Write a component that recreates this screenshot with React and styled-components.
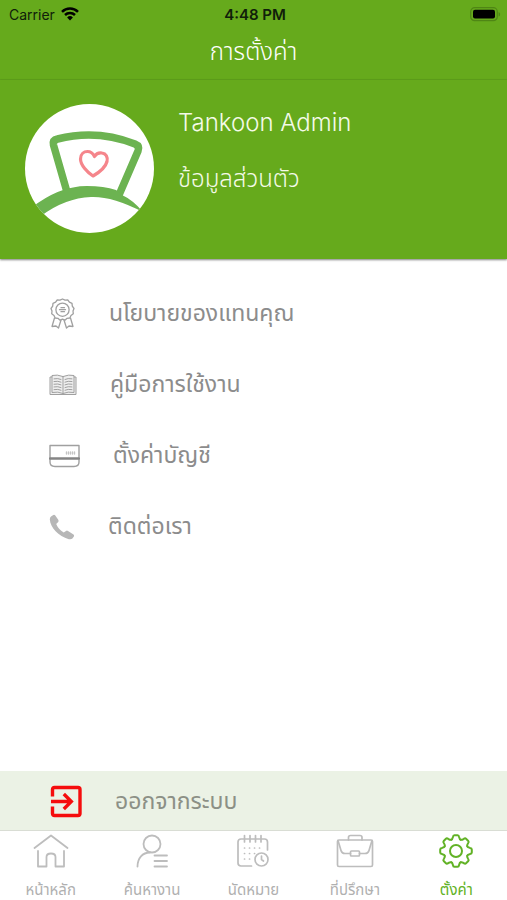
import React from "react";
import styled, { createGlobalStyle } from "styled-components";

const GlobalStyle = createGlobalStyle`
  * {
    box-sizing: border-box;
  }

  body {
    margin: 0;
    background: #fff;
    font-family: Lato, "Noto Sans Thai", "Noto Sans", "Liberation Sans", sans-serif;
    font-weight: 400;
  }
`;

const Screen = styled.div`
  display: flex;
  flex-direction: column;
  min-height: 100vh;
`;

const StatusBar = styled.div`
  display: grid;
  grid-template-columns: 1fr auto 1fr;
  align-items: center;
  height: 28px;
  padding: 0 6px 0 9px;
  background: #66aa1c;
  color: #10200a;
  font-family: Inter, "Liberation Sans", sans-serif;
  font-size: 14px;

  .carrier {
    display: flex;
    align-items: center;
    gap: 6px;
  }

  .battery {
    justify-self: end;
  }

  svg {
    display: block;
  }
`;

const Clock = styled.time`
  font-size: 15px;
  font-weight: 600;
`;

const TitleBar = styled.header`
  display: flex;
  justify-content: center;
  height: 52px;
  border-bottom: 1px solid #5fa11a;
  background: #66aa1c;

  h1 {
    margin: 0;
    color: #fff;
    font-size: 24px;
    font-weight: 300;
    line-height: 46px;
  }
`;

const Profile = styled.section`
  display: flex;
  gap: 24px;
  padding: 24px 25px 26px;
  background: #66aa1c;
  color: #f4fae8;
  box-shadow: 0 1px 2px rgba(0, 0, 0, 0.5);

  .avatar {
    display: block;
    flex-shrink: 0;
  }

  h2 {
    margin: 0 0 18px;
    font-family: Inter, "Liberation Sans", sans-serif;
    font-size: 24px;
    font-weight: 300;
    line-height: 38px;
  }

  a {
    display: block;
    color: inherit;
    font-size: 24px;
    font-weight: 300;
    line-height: 36px;
    text-decoration: none;
  }
`;

const Menu = styled.nav`
  display: flex;
  flex: 1;
  flex-direction: column;
  padding-top: 19px;
`;

const MenuLink = styled.a`
  display: flex;
  align-items: center;
  gap: 33px;
  height: 71px;
  padding-left: 49px;
  color: #8c8c8c;
  font-size: 23px;
  text-decoration: none;
`;

const LogoutButton = styled.button`
  display: flex;
  align-items: center;
  gap: 33px;
  width: 100%;
  height: 59px;
  padding: 2px 0 0 49px;
  border: 0;
  background: #ebf2e5;
  color: #8c9086;
  font-family: inherit;
  font-size: 23px;
`;

const TabBar = styled.nav`
  display: grid;
  grid-template-columns: repeat(5, 1fr);
  height: 70px;
  border-top: 1px solid #d9ddd4;
  background: #fff;
`;

const Tab = styled.a`
  display: flex;
  flex-direction: column;
  align-items: center;
  gap: 11px;
  padding-top: 3px;
  color: ${(props) => (props.$active ? "#62b226" : "#b0b0b0")};
  font-size: 15px;
  line-height: 20px;
  text-decoration: none;
  white-space: nowrap;

  svg {
    color: ${(props) => (props.$active ? "#62b226" : "#bdbdbd")};
  }
`;

const Svg = styled.svg`
  display: block;
  flex-shrink: 0;
  fill: none;
  stroke: currentColor;
  stroke-width: ${(props) => props.$line || 1};
  stroke-linecap: round;
  stroke-linejoin: round;
`;

const MenuSvg = styled(Svg)`
  color: #a0a0a0;
`;

function WifiIcon() {
  return (
    <svg width="18" height="14" viewBox="0 0 18 14" fill="none" stroke="#000" strokeWidth="2.5">
      <path d="M1 4.9a11.4 11.4 0 0 1 16 0" />
      <path d="M4 8a7.2 7.2 0 0 1 10 0" />
      <path d="M9 13.6 6.1 10.5a4.2 4.2 0 0 1 5.8 0Z" fill="#000" stroke="none" />
    </svg>
  );
}

function BatteryIcon() {
  return (
    <svg className="battery" width="31" height="15" viewBox="0 0 31 15">
      <rect x="0.7" y="0.7" width="26.6" height="13" rx="4" fill="none" stroke="#4f8615" strokeWidth="1.2" />
      <rect x="3" y="2.8" width="22" height="8.8" rx="2" fill="#000" />
      <path d="M28.6 5v4.6c2-.8 2-3.8 0-4.6Z" fill="#4f8615" />
    </svg>
  );
}

function Avatar() {
  return (
    <svg className="avatar" width="129" height="129" viewBox="0 0 129 129">
      <defs>
        <clipPath id="avatar-circle">
          <circle cx="64.5" cy="64.5" r="64.5" />
        </clipPath>
      </defs>
      <g clipPath="url(#avatar-circle)">
        <rect width="129" height="129" fill="#fff" />
        <path
          d="M42 88 28.500 41Q27.500 36 32.500 35Q72 25 110 40Q115 42 113 47L94 91"
          fill="none"
          stroke="#6cb351"
          strokeWidth="7.5"
          strokeLinejoin="round"
        />
        <path
          d="M6 104Q34 82 62 82Q79 82 91 86L97 91Q108 96 118 108Q87 92 66 93Q40 94 16 112Z"
          fill="#6cb351"
        />
        <path
          d="M68 72C62 68 55.500 61 55.500 55C55.500 50 59 47.500 62.500 47.500C65.500 47.500 68 49.500 69.500 52.500C71 50 74 48.500 77 49C81 49.500 83 53 82 57.500C80.500 63.500 74 68.500 68 72Z"
          fill="none"
          stroke="#f5858b"
          strokeWidth="3.2"
          strokeLinejoin="round"
        />
      </g>
    </svg>
  );
}

function MedalIcon() {
  return (
    <MenuSvg $line="1.3" width="27" height="31" viewBox="0 0 27 31">
      <path d="M13.500 1 16 2.200 18.800 2 20.400 4.200 23 5.300 23.300 8.100 25 10.500 24 13 24.300 15.800 22 17.500 20.800 20 18 20.300 16 22.200 13.500 21.200 11 22.200 9 20.300 6.200 20 5 17.500 2.700 15.800 3 13 2 10.500 3.700 8.100 4 5.300 6.600 4.200 8.200 2 11 2.200Z" />
      <circle cx="13.5" cy="11.7" r="6.6" />
      <path d="M12 9.700h3.500M10.500 11.700h6M12 13.700h3.500" />
      <path d="M5.500 20 3 28.500 7 28 9.500 30 12 22M21.500 20 24 28.500 20 28 17.500 30 15 22" />
    </MenuSvg>
  );
}

function BookIcon() {
  return (
    <MenuSvg width="28" height="22" viewBox="0 0 28 22">
      <path
        d="M14 2.500Q8 .2 3 1.500V3H1V20.500H27V3H25V1.500Q20 .2 14 2.500ZM3 3V18.500Q9 17.300 14 19.500Q19 17.300 25 18.500V3M14 2.500V20"
        fill="#eee"
      />
      <path
        d="M5 4.800q4-.8 7 .6M5 7.500q4-.8 7 .6M5 10.200q4-.8 7 .6M5 12.900q4-.8 7 .6M5 15.600q4-.8 7 .6M16 5.400q3-1.400 7-.6M16 8.100q3-1.400 7-.6M16 10.800q3-1.400 7-.6M16 13.500q3-1.400 7-.6M16 16.200q3-1.400 7-.6"
      />
    </MenuSvg>
  );
}

function CardIcon() {
  return (
    <MenuSvg $line="1.4" width="31" height="24" viewBox="0 0 31 24">
      <path d="M1 1.500H30V18Q30 22.500 25 22.500H6Q1 22.500 1 18Z" />
      <path d="M1 14.500H30" strokeWidth="2.4" stroke="#858585" />
      <path d="M17.500 8v2M19.500 8v2M21.500 8v2M23.500 8v2M25.500 8v2" stroke="#c4c4c4" />
    </MenuSvg>
  );
}

function PhoneIcon() {
  return (
    <svg width="26" height="26" viewBox="0 0 26 26">
      <path
        d="M2 2.600 4.300 1Q5.500.5 6.300 1.600L9.400 6.100Q10 7.300 9 8.200L7.200 9.900Q9.400 15.200 14.700 18.400L17 16.900Q18 16.300 19 17L24.500 20.500Q25.500 21.300 24.900 22.400L23.400 24.500Q22.300 25.600 19.800 25.200C9.500 22.500 1.300 13.500.8 5.600Q.7 3.700 2 2.600Z"
        fill="#b7b7b7"
      />
    </svg>
  );
}

function LogoutIcon() {
  return (
    <svg width="33" height="33" viewBox="0 0 33 33" fill="none" stroke="#f50d0d" strokeWidth="3.4">
      <path d="M3.500 11.500V4.500Q3.500 2.500 5.500 2.500H29Q31 2.500 31 4.500V28.500Q31 30.500 29 30.500H5.500Q3.500 30.500 3.500 28.500V21.500" />
      <path d="M2 16.500H22M14.800 9 22.300 16.500 14.800 24" />
    </svg>
  );
}

function HomeIcon() {
  return (
    <Svg $line="1.8" width="36" height="34" viewBox="0 0 36 34">
      <path d="M1.500 14 18 1.500 34.500 14M5 17V32.500H13.500V23Q13.500 19.500 18 19.500Q22.500 19.500 22.500 23V32.500H31V17" />
    </Svg>
  );
}

function PersonIcon() {
  return (
    <Svg $line="1.8" width="32" height="34" viewBox="0 0 32 34">
      <circle cx="16" cy="10" r="8.5" />
      <path d="M1.500 32.500C1.500 24 6.500 18.500 14 18.500M18.500 21.500H31M18.500 27H31M18.500 32.500H31" />
    </Svg>
  );
}

function CalendarIcon() {
  return (
    <Svg $line="1.7" width="34" height="34" viewBox="0 0 34 34">
      <path d="M15.500 32H5Q2 32 2 29V8Q2 5 5 5H28.500Q31.500 5 31.500 8V16M8.500 1.500V8M14 1.500V8M19.500 1.500V8M25 1.500V8" />
      <circle cx="25.5" cy="25.5" r="6.5" />
      <path d="M25.500 22V25.500L27.500 27" />
      <path d="M8.500 14h.1M13.500 14h.1M18.500 14h.1M23.500 14h.1M8.500 19.500h.1M13.500 19.500h.1M18.500 19.500h.1M8.500 25h.1M13.500 25h.1" />
    </Svg>
  );
}

function BriefcaseIcon() {
  return (
    <Svg $line="1.7" width="38" height="34" viewBox="0 0 38 34">
      <rect x="1.5" y="6" width="35" height="26.5" rx="1.5" />
      <path d="M12.500 6V3.500Q12.500 1.500 14.500 1.500H24Q26 1.500 26 3.500V6M2 6.500 5 16.500Q5.800 19.500 9 19.500H14.500M36 6.500 33 16.500Q32.200 19.500 29 19.500H23.500" />
      <rect x="14.5" y="17" width="9" height="5" rx="1" />
    </Svg>
  );
}

const teeth = [0, 45, 90, 135, 180, 225, 270, 315];

function GearIcon() {
  return (
    <Svg $line="2" width="34" height="34" viewBox="-17 -17 34 34">
      {teeth.map((angle) => (
        <path
          key={angle}
          d="M-4.700-11.300C-3.500-11.700-3.400-12.600-3.100-14Q-2.800-15.800-1.600-15.800H1.600Q2.800-15.800 3.100-14C3.400-12.600 3.500-11.700 4.700-11.300"
          transform={`rotate(${angle})`}
        />
      ))}
      <circle r="6" />
    </Svg>
  );
}

const menuItems = [
  { label: "นโยบายของแทนคุณ", href: "#policy", Icon: MedalIcon },
  { label: "คู่มือการใช้งาน", href: "#manual", Icon: BookIcon },
  { label: "ตั้งค่าบัญชี", href: "#account", Icon: CardIcon },
  { label: "ติดต่อเรา", href: "#contact", Icon: PhoneIcon },
];

const tabs = [
  { label: "หน้าหลัก", href: "#home", Icon: HomeIcon },
  { label: "ค้นหางาน", href: "#jobs", Icon: PersonIcon },
  { label: "นัดหมาย", href: "#appointments", Icon: CalendarIcon },
  { label: "ที่ปรึกษา", href: "#consult", Icon: BriefcaseIcon },
  { label: "ตั้งค่า", href: "#settings", Icon: GearIcon, active: true },
];

export default function App() {
  return (
    <Screen>
      <GlobalStyle />
      <StatusBar>
        <span className="carrier">
          Carrier <WifiIcon />
        </span>
        <Clock>4:48 PM</Clock>
        <BatteryIcon />
      </StatusBar>

      <TitleBar>
        <h1>การตั้งค่า</h1>
      </TitleBar>

      <Profile>
        <Avatar />
        <div>
          <h2>Tankoon Admin</h2>
          <a href="#profile">ข้อมูลส่วนตัว</a>
        </div>
      </Profile>

      <Menu>
        {menuItems.map(({ label, href, Icon }) => (
          <MenuLink href={href} key={href}>
            <Icon />
            {label}
          </MenuLink>
        ))}
      </Menu>

      <LogoutButton type="button">
        <LogoutIcon />
        ออกจากระบบ
      </LogoutButton>

      <TabBar>
        {tabs.map(({ label, href, Icon, active }) => (
          <Tab href={href} key={href} $active={active} aria-current={active ? "page" : undefined}>
            <Icon />
            {label}
          </Tab>
        ))}
      </TabBar>
    </Screen>
  );
}
